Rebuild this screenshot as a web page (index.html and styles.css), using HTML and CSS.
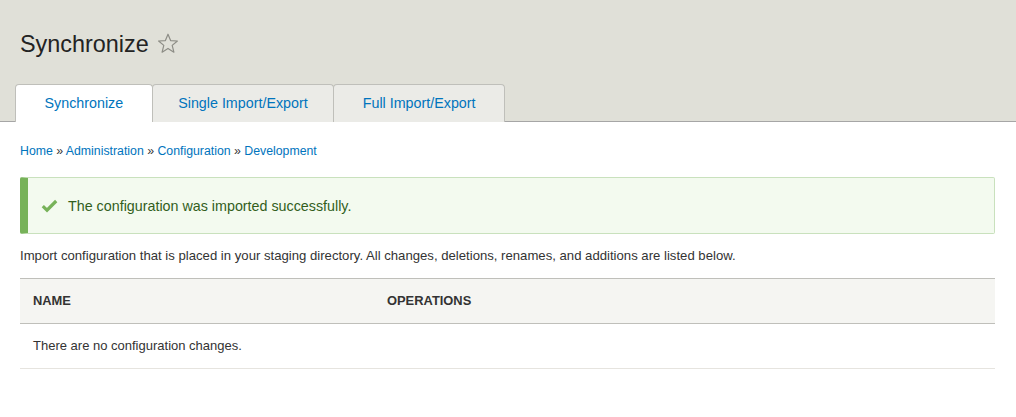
FILE: index.html
```html
<!DOCTYPE html>
<html lang="en">
<head>
<meta charset="utf-8">
<title>Synchronize</title>
<link rel="stylesheet" href="styles.css">
</head>
<body>
<header class="page-header">
  <h1 class="page-title">Synchronize
    <svg class="star" width="22" height="21" viewBox="0 0 22 21" aria-hidden="true">
      <polygon points="11,1.2 13.6,7.6 20.4,8 15.2,12.4 16.9,19.2 11,15.4 5.1,19.2 6.8,12.4 1.6,8 8.4,7.6" fill="none" stroke="#8d8d86" stroke-width="1.2" stroke-linejoin="round"/>
    </svg>
  </h1>
  <ul class="tabs">
    <li class="tab is-active"><a href="#">Synchronize</a></li>
    <li class="tab tab-mid"><a href="#">Single Import/Export</a></li>
    <li class="tab"><a href="#">Full Import/Export</a></li>
  </ul>
</header>
<main class="content">
  <nav class="breadcrumb">
    <a href="#">Home</a> » <a href="#">Administration</a> » <a href="#">Configuration</a> » <a href="#">Development</a>
  </nav>
  <div class="message">
    <svg class="check" width="17" height="14" viewBox="0 0 17 14" aria-hidden="true">
      <polyline points="1.8,7.2 6,11.2 15.2,2" fill="none" stroke="#77b259" stroke-width="3.2"/>
    </svg>
    <span>The configuration was imported successfully.</span>
  </div>
  <p class="description">Import configuration that is placed in your staging directory. All changes, deletions, renames, and additions are listed below.</p>
  <table class="config-table">
    <thead>
      <tr><th class="col-name">Name</th><th>Operations</th></tr>
    </thead>
    <tbody>
      <tr><td colspan="2">There are no configuration changes.</td></tr>
    </tbody>
  </table>
</main>
</body>
</html>
```

FILE: styles.css
```css
* { box-sizing: border-box; }

body {
  margin: 0;
  background: #fff;
  color: #333;
  font-family: "Liberation Sans", Arial, sans-serif;
  font-size: 13px;
}

a { color: #0074bd; text-decoration: none; }

.page-header {
  background: #e0e0d8;
  border-bottom: 1px solid #a6a6a6;
  padding: 30px 0 0 15px;
}

.page-title {
  margin: 0 0 26px 5px;
  font-size: 23.4px;
  font-weight: normal;
  line-height: 28px;
  color: #232323;
  display: flex;
  align-items: center;
  gap: 8px;
}

.star { display: block; margin-top: -1px; }

.tabs {
  list-style: none;
  margin: 0 0 -1px;
  padding: 0;
  display: flex;
}

.tab {
  background: #ebebe7;
  border: 1px solid #bfbfba;
  border-bottom: none;
  border-radius: 4px 4px 0 0;
  height: 38px;
  display: flex;
  align-items: center;
  padding: 0 28.5px 1px;
  font-size: 14.3px;
}

.tab + .tab { margin-left: -1px; }

.tab-mid { padding: 0 25.5px 1px; }

.tab.is-active {
  background: #fff;
  position: relative;
  z-index: 1;
}

.content { padding: 20px 21px 0 20px; }

.breadcrumb {
  font-size: 12.3px;
  line-height: 18px;
  color: #333;
}

.message {
  margin-top: 17px;
  display: flex;
  align-items: center;
  gap: 10px;
  background: #f3faef;
  border: 1px solid #c9e1bd;
  border-left: 8px solid #77b259;
  border-radius: 2px;
  padding: 18px 13px 17px;
  color: #325e1c;
  font-size: 14.3px;
  line-height: 20px;
}

.check { display: block; }

.description {
  margin: 13px 0;
  line-height: 18px;
  font-size: 13.15px;
}

.config-table {
  width: 100%;
  border-collapse: collapse;
  border-top: 1px solid #bfbfba;
}

.config-table th {
  text-align: left;
  text-transform: uppercase;
  font-size: 12.9px;
  font-weight: bold;
  color: #333;
  background: #f5f5f2;
  border-bottom: 1px solid #bfbfba;
  padding: 13px 13px;
  line-height: 18px;
}

.config-table .col-name { width: 354px; }

.config-table td {
  padding: 13px 13px;
  line-height: 18px;
  font-size: 13px;
  border-bottom: 1px solid #e6e4df;
}
```
